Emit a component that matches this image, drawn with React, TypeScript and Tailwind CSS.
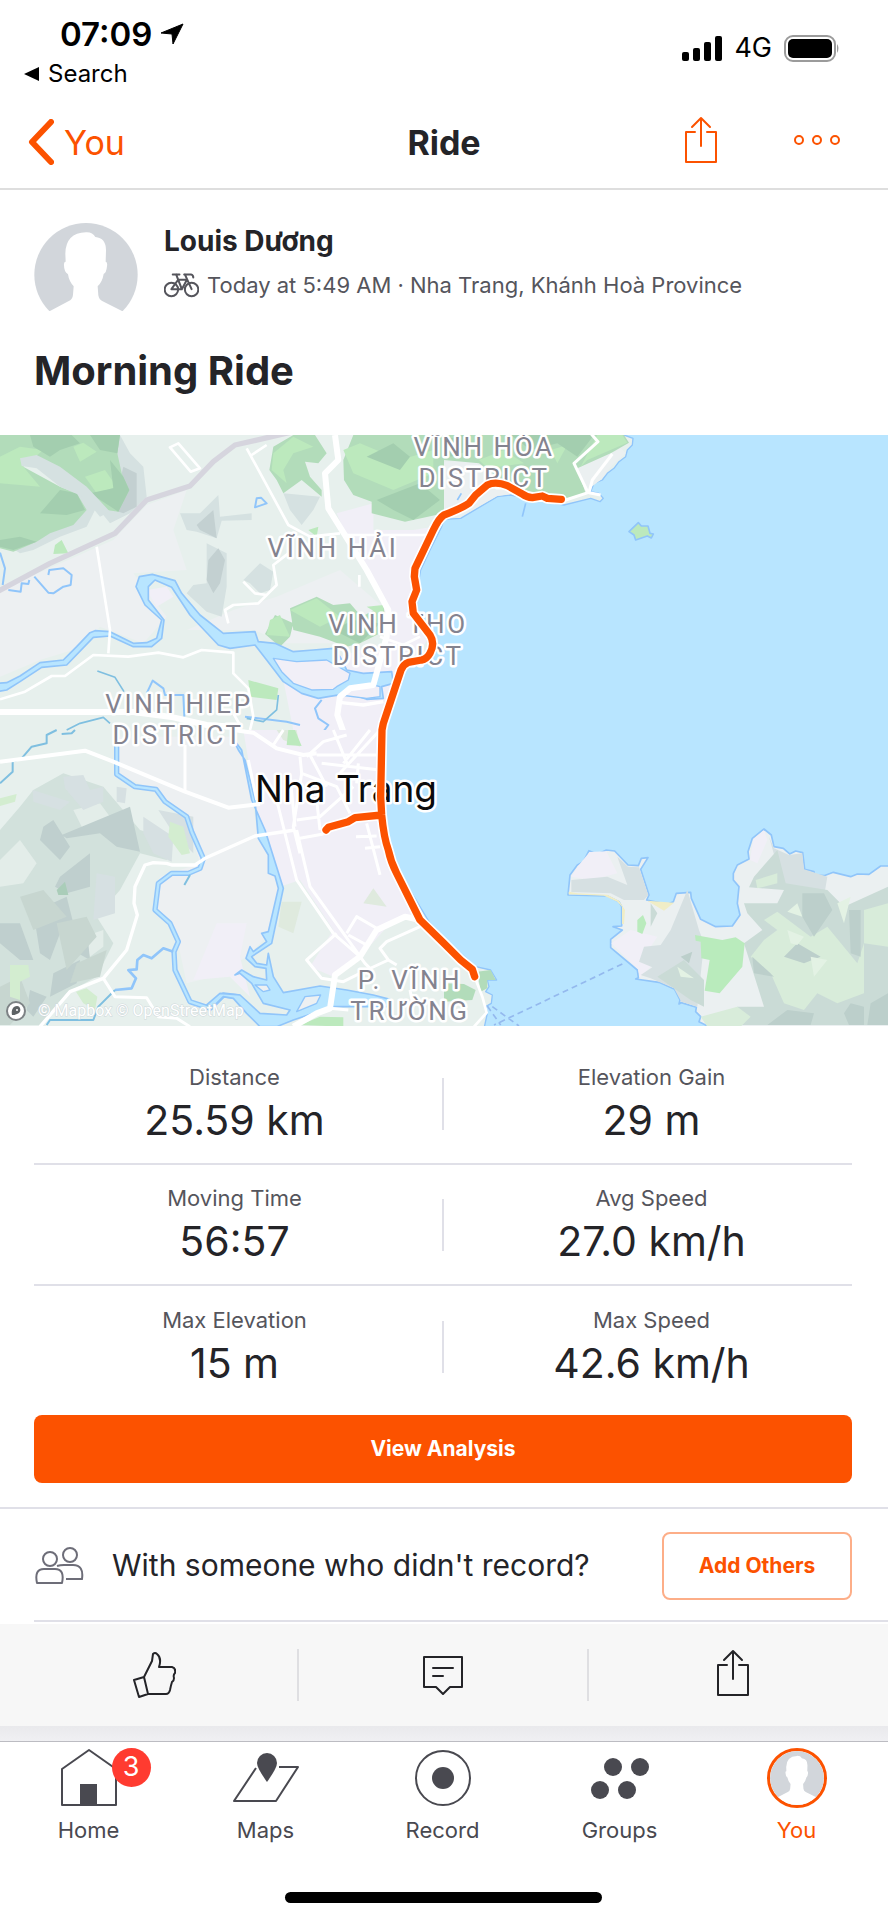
import React from "react";

const stats = [
  [
    { label: "Distance", value: "25.59 km" },
    { label: "Elevation Gain", value: "29 m" },
  ],
  [
    { label: "Moving Time", value: "56:57" },
    { label: "Avg Speed", value: "27.0 km/h" },
  ],
  [
    { label: "Max Elevation", value: "15 m" },
    { label: "Max Speed", value: "42.6 km/h" },
  ],
];

// district names, one entry per line of text
const districts = [
  { x: 484, y: 21, text: "VĨNH HÒA" },
  { x: 484, y: 52, text: "DISTRICT" },
  { x: 333, y: 122, text: "VĨNH HẢI" },
  { x: 398, y: 198, text: "VINH THO" },
  { x: 398, y: 230, text: "DISTRICT" },
  { x: 179, y: 278, text: "VINH HIEP" },
  { x: 178, y: 309, text: "DISTRICT" },
  { x: 410, y: 554, text: "P. VĨNH" },
  { x: 410, y: 585, text: "TRƯỜNG" },
];

const route =
  "M1684 193L1642 190 1627 183 1597 188Q1580 187 1567 177L1522 152Q1487 138 1462 150L1427 180 1407 205Q1385 220 1332 240 1318 248 1300 285L1245 400 1243 425 1250 465 1236 500 1240 535 1290 600Q1306 625 1290 655 1280 673 1265 675L1225 682Q1210 688 1203 705L1150 865 1146 885 1142 1085 1145 1140Q1152 1210 1165 1245 1172 1280 1190 1315L1260 1455 1332 1525 1382 1575 1417 1603 1424 1625M1145 1140L1065 1148 1045 1160 985 1177 978 1185";

function Avatar({ full, className }: { full?: boolean; className: string }) {
  return (
    <svg viewBox={full ? "103 68 310 310" : "103 68 310 264"} className={className} aria-hidden="true">
      <circle cx="258" cy="223" r="155" fill="#d2d6db" />
      <path
        fill="#fff"
        d="M150 332L205 303Q218 297 219 283L221 258Q207 243 204 222 192 215 192 195 191 183 197 184L196 160Q197 98 258 96 278 95 286 110 318 113 318 150L317 184Q323 184 321 198 319 218 311 221 307 245 293 258L295 285Q297 298 308 303L366 332V400H150Z"
      />
    </svg>
  );
}

function ShareIcon({ className }: { className: string }) {
  return (
    <svg viewBox="0 0 34 48" fill="none" stroke="currentColor" strokeWidth="2" strokeLinejoin="round" strokeLinecap="round" className={className} aria-hidden="true">
      <path d="M11 16H2v30h30V16h-9M17 30V2M8 11l9-9 9 9" />
    </svg>
  );
}

function RideMap() {
  return (
    <svg viewBox="0 0 888 591" className="block w-full" role="img" aria-label="Map of the ride around Nha Trang">
      <rect width="888" height="591" fill="#b8e5ff" />
      <g transform="scale(0.33333)" strokeLinejoin="round">
        {/* mainland */}
        <path
          fill="#e7f0ed"
          stroke="#90c5fa"
          strokeWidth="4"
          d="M-10-10H1872V0L1899 10 1897 30 1882 45 1877 65 1857 80 1842 100 1822 115 1807 135 1782 145 1772 170 1797 175 1810 190 1800 200 1772 190 1692 210 1580 190 1532 180 1492 185 1382 250 1332 253 1325 275 1290 345 1262 405 1252 460 1250 535 1300 625 1270 675 1210 685 1185 712 1175 760 1160 835 1142 885 1152 890 1150 1135 1160 1215 1190 1295 1230 1365 1290 1465 1332 1510 1382 1555 1427 1595 1472 1605 1490 1635 1462 1635 1467 1655 1457 1670 1477 1680 1474 1705 1457 1715 1462 1735 1450 1790H-10Z"
        />

        {/* north west */}
        <g transform="translate(0 -15)">
          <path fill="#edf0f2" d="M0 480L340 330 440 225 560 180 520 300 560 420 400 430 500 560 430 640 300 590 250 650 120 690 0 740ZM560 600L700 540 830 500 1020 420 1160 540 1000 640 860 640 760 600Z" />
          <path fill="#f1eff7" d="M1010 250L1120 220 1120 300 1240 300 1300 290 1240 420 1240 520 1290 620 1160 800 1150 900H880L850 750 820 680 980 690 1160 640 1170 530 1040 320ZM440 480L500 470 520 500 470 530Z" />
          <path fill="#d5e1e1" d="M330 15L360 15 390 70 430 110 440 200 390 250 330 280 290 230 260 290 180 320 100 360 60 370 30 350 100 280 240 150ZM540 250L600 250 655 195 660 260 755 250 755 270 665 272 650 325 590 305 560 300ZM620 340L680 370 680 470 665 560 620 545 560 490 580 465 620 460ZM730 450L780 400 820 425 810 480 780 490 750 460ZM850 190L960 200 940 240 905 285 870 240Z" />
          <path fill="#c3d0d1" d="M625 390L655 355 675 390 660 460 640 490 620 450ZM590 285L640 240 650 325 600 300ZM370 110L410 130 410 230 370 250 340 240Z" />
          <path fill="#b2dcba" d="M0 15H360L352 70 365 130 388 180 355 245 320 240 240 170 130 110 70 80 60 105 180 170 230 190 260 240 220 285 150 310 110 335 40 365 0 355ZM820 50L880 15H945L980 70 955 100 915 95 930 140 965 180 965 200 905 150 850 190 830 150 808 120ZM1030 90L1060 15H1332V250L1215 275 1115 250 1115 215 1060 195 1032 150ZM870 535L950 500 1000 525 1050 520 1085 560 1150 525 1160 600 1080 640 1040 650 960 620 880 600ZM825 555L880 580 870 620 840 650 795 612Z" />
          <path fill="#bce9bd" d="M0 80L60 50 130 60 70 110 120 170 0 160ZM220 50L250 38 290 65 240 95ZM255 140L315 120 350 170 290 190ZM820 70L880 20 940 50 880 70 850 120 860 160 815 120ZM1030 60L1080 40 1200 90 1300 60 1300 130 1180 180 1060 130ZM870 540L950 505 1020 560 960 590ZM810 570L840 555 870 620 800 615ZM1100 530L1150 525 1150 560ZM165 345L185 330 205 370 160 372ZM925 300L955 290 950 320ZM745 750L835 775 830 810 750 800Z" />
          <path fill="#a3ceaf" d="M90 15H215L240 40 180 60 150 80 100 50ZM270 15H360L352 70 300 60ZM330 90L370 140 388 180 355 245 270 190 340 175ZM120 250L180 180 230 190 255 240 200 255ZM1100 80L1180 40 1230 80 1200 120ZM1130 210L1260 160 1320 210 1240 270 1180 240ZM1000 600L1060 570 1140 580 1080 640ZM0 330L60 320 110 335 40 360 0 350Z" />
          <path fill="#d5e1e1" d="M60 85L110 75 180 110 260 170 330 245 300 260 250 200 180 170 110 115 65 108Z" />

          {/* waterways */}
          <path fill="#b8e5ff" stroke="#90c5fa" strokeWidth="5" d="M-10 760L20 758 60 738 120 698 190 690 230 650 270 608 285 602 330 605 400 640 440 638 470 625 485 570 435 525 408 470 418 440 457 433 525 452 545 490 600 555 670 610 765 605 775 635 825 640 880 665 940 660 1000 655 1020 680 1040 720 1090 730 1175 725 1180 760 1145 770 1150 805 1100 808 1045 790 985 800 955 805 905 790 850 755 800 690 765 645 690 655 655 645 570 555 515 472 465 450 445 470 445 510 492 570 485 625 455 650 400 650 330 618 280 622 200 705 125 712 60 755 20 780 -10 785Z" />
          <path fill="#f1eff7" stroke="#90c5fa" strokeWidth="4" d="M820 685L890 695 980 690 1050 730 1045 750 1010 770 1000 778 935 780 880 760 845 725ZM1020 795L1050 775 1120 765 1140 770 1140 800 1100 805Z" />
          <path fill="none" stroke="#90c5fa" strokeWidth="6" d="M145 435L148 420 190 415 215 435 212 465 190 470 160 490 145 488 103 440M88 450L85 462 65 460 62 485 25 480M965 810L945 835 955 865 985 885 970 905M0 368L15 415 8 465M770 205L765 232 800 220 783 203ZM440 790L458 752 490 775 495 795 550 795 553 860M735 860L860 875 900 885" />
          <path fill="none" stroke="#7fbfe0" strokeWidth="5" d="M292 723L345 742 372 785M835 795L830 840 790 875 740 865M200 900L240 880 310 862 330 880" />

          {/* roads */}
          <g fill="none" stroke="#fff">
            <path strokeWidth="8" d="M740 55L865 285 930 320 1020 310M755 75L800 45M865 370L820 405 830 465 775 520 700 525 675 540 685 580M730 455L765 490 800 495M290 350L330 600 325 670M0 808L75 785 155 738 195 738 280 675 385 680 475 668 550 682 605 660 700 668 700 730 745 775 760 860 750 900M510 52L535 40 600 115 572 125ZM1040 315L1290 315M1078 435V470M1140 620L1210 645 1260 620M700 850L720 885" />
            <path strokeWidth="18" d="M1005 15L1015 90 975 130 985 235 1100 420 1165 540 1160 620 1120 765 1050 775 1020 800 1012 855 1030 905M0 846H400L520 862 620 885 700 890" />
            <path strokeWidth="10" d="M1025 818L1090 825 1150 815" />
            <path stroke="#d6d5de" strokeWidth="16" d="M-10 486L150 400 345 310 440 210 570 168 640 95 705 45 880 5" />
          </g>
        </g>

        {/* north east headland and islet */}
        <g transform="translate(1332 -15)">
          <path fill="#ebf0f1" d="M0 95L100 90 110 150 360 208 200 192 160 198 50 260 0 262ZM400 115L500 70 530 55 545 70 500 110 470 150 430 180Z" />
          <path fill="#b2dcba" d="M0 15H540L555 38 500 70 400 115 425 190 360 208 200 170 105 100 0 90Z" />
          <path fill="#bce9bd" d="M105 90L180 60 240 100 130 115ZM460 15H535L550 38 430 90 410 110ZM320 60L370 45 340 100Z" />
          <path fill="#a3ceaf" d="M200 15H450L400 80 340 40 260 60ZM0 30L60 15 80 60 20 80Z" />
          <path fill="none" stroke="#90c5fa" strokeWidth="5" d="M245 220L235 260M52 190L40 210" />
          <path fill="none" stroke="#fff" strokeWidth="9" d="M440 10L462 35 390 100 432 188 365 210M505 72L445 150 435 188 470 195" />
          <path fill="#bce9bd" stroke="#90c5fa" strokeWidth="5" d="M555 305L583 278 592 288 612 288 618 310 628 312 622 324 610 318 575 330 570 315Z" />
        </g>

        {/* south west */}
        <g transform="translate(0 885)">
          <path fill="#edf0f2" d="M350 20L700 20 740 90 770 300 830 440 840 520 800 620 740 680 640 740 560 760 530 620 465 530 480 440 600 400 560 270 460 180 350 130Z" />
          <path fill="#f1eff7" d="M730 0H1150L1145 260 1180 410 1250 550 1180 570 1080 680 1000 740 930 710 1000 600 900 450 840 470 780 300ZM650 580L740 580 720 680 750 800 690 740 580 750Z" />
          <path fill="#d2e1dc" d="M0 300L60 230 100 180 190 130 310 170 420 300 520 330 500 390 420 370 360 480 290 560 340 640 290 740 200 790 130 885H0Z" />
          <path fill="#e3ede9" d="M0 390L60 330 110 400 70 460 0 470ZM220 240L300 220 330 260 250 300ZM250 620L310 600 310 650 270 680Z" />
          <path fill="#d6e0e2" d="M190 140L250 135 270 180 310 170 310 215 250 240 195 175ZM98 180L210 215 180 240 100 215ZM350 170L380 175 375 220 350 215ZM430 260L520 320 515 395 460 370 430 310ZM475 240L580 260 580 370 520 310ZM290 430L345 440 345 550 280 570Z" />
          <path fill="#bfcfce" d="M130 290L160 270 210 350 180 390 120 330ZM185 315L390 230 420 365 350 350 300 310 200 325ZM180 440L270 370 270 470 200 490 165 470ZM100 545L200 500 230 620 180 610 150 690 120 670ZM0 580L60 580 100 690 60 690 0 640ZM160 730L240 690 230 760 150 800ZM90 780L140 800 100 860 80 840ZM200 650L260 590 270 690Z" />
          <path fill="#c7d6d0" d="M60 500L130 480 200 560 100 600ZM170 580L260 560 290 620 200 720ZM230 700L320 660 300 740 210 760ZM0 770L60 740 90 820 30 885H0Z" />
          <path fill="#d3edd0" d="M510 275L550 290 570 370 545 375 505 320ZM0 205L50 192 45 215 0 228ZM228 785L260 775 292 800 285 840 250 820ZM30 705L85 705 90 740 60 755 60 810 30 800Z" />
          <path fill="#aacdb9" d="M170 480L195 455 205 495 175 495Z" />
          <path fill="#dfeade" d="M830 0H890L900 50 850 30ZM845 515L905 515 880 610 835 590ZM1090 520L1120 475 1160 530Z" />
          <path fill="#bce9bd" d="M865 0H885L905 48 860 45ZM900 885L960 860 1030 862 1030 890Z" />

          <path fill="none" stroke="#90c5fa" strokeWidth="16" d="M350 20V133L405 170 468 178 495 215 560 260 575 305 610 385 600 415 565 430 515 430 475 460 465 540 510 580 535 635 522 665 525 720 570 815 630 835 670 795 715 800 770 860 830 885" />
          <path fill="none" stroke="#b8e5ff" strokeWidth="7" d="M350 20V133L405 170 468 178 495 215 560 260 575 305 610 385 600 415 565 430 515 430 475 460 465 540 510 580 535 635 522 665 525 720 570 815 630 835 670 795 715 800 770 860 830 885" />
          <path fill="#b8e5ff" stroke="#90c5fa" strokeWidth="5" d="M695 20L725 60 755 210 795 300 850 475 815 640 755 680 770 700 800 705 805 670 820 740 850 788 960 768 1040 780 1120 795 1170 808 1170 830 1000 830 880 870 830 890 780 890 740 850 700 805 670 800 640 830 620 825 660 790 720 795 780 850 860 855 870 840 790 820 755 760 720 730 705 735 725 720 760 740 800 750 798 715 765 710 738 685 750 650 760 665 800 635 785 610 805 605 835 475 825 438 805 430 805 375 775 325 765 210 735 90 715 60Z" />
          <path fill="#edf0f2" stroke="#90c5fa" strokeWidth="4" d="M765 765L800 765 810 780 790 785ZM890 845L915 800 962 795 950 820Z" />
          <path fill="none" stroke="#90c5fa" strokeWidth="8" d="M520 665L490 655 455 685 430 675 412 690 410 718 385 720 408 745 395 775 345 780" />
          <path fill="none" stroke="#7fbfe0" strokeWidth="6" d="M345 780L295 830 280 870 150 870 140 885M0 160L38 125 38 95 65 85 95 50 140 40 140 15 170 0M185 12L215 10 225 0M570 435L553 465" />

          <g fill="none" stroke="#fff">
            <path strokeWidth="12" d="M0 95L255 62 340 95 555 185 685 233 780 222M700 0L760 8 830 55 910 75 950 70" />
            <path strokeWidth="10" d="M120 890L210 785 310 745 380 660 412 555 402 520 405 470 435 405 460 398 500 400 515 405 585 405 615 385 765 318 885 300" />
            <path strokeWidth="18" d="M880 890L950 850 990 835 1005 735 1080 680 1130 600 1215 560 1260 570" />
            <path strokeWidth="9" d="M555 45V180M745 90L770 210M830 210L890 450 1000 610 1080 680M890 300L930 470 1095 700 1115 720M900 80L905 130 880 290 900 370M870 135L885 290M905 130L1010 170 1050 250M930 75L980 170M920 80L970 35 1040 15M950 75H1140M1000 0L1045 110M1030 100L1110 0M965 100L1140 120M1010 140L1140 0M1075 100L1070 160M900 325L970 312M890 270L960 260 1060 170M950 210L960 300M820 45L850 0M1068 320L1130 318M1095 355L1140 350M1100 280L1140 435M1010 610L920 690 965 745 1030 755 1100 720 1165 690 1140 655 1160 635 1260 590M1040 610L1070 560 1130 595M1045 615L1100 645M310 745L345 800 440 803 475 860 530 865 570 890M990 835L1045 840M1230 780L1240 830M1165 690L1190 705" />
          </g>
        </g>

        {/* south east island */}
        <g transform="translate(1332 885)">
          <path
            fill="#ebf0f1"
            stroke="#90c5fa"
            strokeWidth="5"
            d="M372 495L378 435 400 405 418 395 435 362 460 373 487 360 512 363 552 405 583 407 592 385 612 383 590 418 615 495 608 510 670 523 688 515 697 490 740 487 742 505 770 568 815 590 865 588 888 555 880 520 885 470 868 450 868 430 880 405 915 387 912 365 925 325 960 297 982 315 990 350 1018 355 1037 372 1055 363 1076 368 1082 418 1110 425 1112 435 1140 437 1168 427 1220 440 1240 432 1275 433 1310 408 1350 408V900L795 890 765 875 770 860 755 845 757 832 712 818 705 822 708 810 692 778 645 757 575 747 583 743 580 720 500 653 500 628 535 600 507 590 533 588 533 530 525 515 490 498Z"
          />
          <path fill="#f1eff7" d="M382 440L402 408 437 366 487 364 520 430 440 450ZM502 640L560 600 640 620 600 680 620 710 588 742 582 718ZM918 390L928 328 960 300 970 330 940 400Z" />
          <path fill="#f0edc6" d="M374 485L400 490 490 494 525 512 543 540 540 582 534 582 534 530 520 515 480 497 374 493ZM610 512L690 518 660 542Z" />
          <path fill="#d6e0e2" d="M382 450L490 440 550 465 520 380 552 410 585 412 613 495 600 510 540 510 500 490 382 486ZM600 650L650 645 680 600 730 480 765 600 780 640 760 830 712 815 690 775 620 745 590 735 625 712 585 695ZM975 320L990 355 1035 375 1075 370 1080 418 1150 440 1140 500 1020 480Z" />
          <path fill="#cadbd6" d="M930 440L1000 360 1025 460 1150 480 1200 530 1332 470V885H800L880 830 960 830 900 640 955 600 910 550 900 520 1000 520 1020 480 915 472ZM640 740L720 690 780 750 780 830 740 810ZM620 520L640 550 620 590Z" />
          <path fill="#d8ecda" d="M935 450L1000 430 1000 460 940 475ZM960 570L1000 545 1100 620 1150 590 1240 700 1260 640 1260 790 1180 820 1120 790 1080 840 1020 820 980 730 920 680 960 630 1000 600ZM770 860L880 830 920 860 890 890H790ZM1260 540L1332 520V650L1260 640Z" />
          <path fill="#bccfcb" d="M1075 490L1140 490 1165 540 1110 620 1075 560ZM1020 680L1060 640 1130 680 1080 700ZM1215 540L1250 540 1250 680 1220 670ZM925 680L990 740 930 730ZM970 885L1030 840 1110 850 1100 885ZM1200 850L1220 820 1260 830 1260 885H1215ZM710 680L745 665 735 700ZM1280 820L1332 790V885H1270Z" />
          <path fill="#e3f2e4" d="M1030 600L1080 620 1060 645 1040 640ZM1100 680L1150 690 1110 740ZM1180 520L1220 500 1200 580ZM700 710L750 745 710 740ZM1060 520L1075 560 1030 545Z" />
          <path fill="#b9ebbc" d="M753 615L835 630 875 622 902 640 895 710 827 790 782 782 797 690 772 685 770 635 755 632ZM580 570L597 555 607 580 595 612 580 605Z" />
          <path fill="#b2dcba" d="M0 760L60 762 95 780 85 810 0 815ZM100 725L140 720 155 750 130 750 130 775 110 785Z" />
          <path fill="none" stroke="#94b9ee" strokeWidth="5" strokeDasharray="18 12" d="M535 702L150 885M130 828L170 885M145 830L225 888" />
          <path fill="none" stroke="#fff" strokeWidth="8" d="M92 740L115 800 128 848 90 890" />
        </g>
      </g>

      {/* place names sit under the route line */}
      <g textAnchor="middle" fill="#84838f" stroke="#fff" strokeWidth="5" strokeLinejoin="round" className="font-[Roboto,sans-serif] text-[26px] tracking-widest [paint-order:stroke]">
        {districts.map((d) => (
          <text key={d.text + d.y} x={d.x} y={d.y}>
            {d.text}
          </text>
        ))}
      </g>
      <text x="346" y="367" textAnchor="middle" fill="#0b0b0c" stroke="#fff" strokeWidth="5" strokeLinejoin="round" className="text-[37px] [paint-order:stroke]">
        Nha Trang
      </text>

      <g transform="scale(0.33333)" fill="none" strokeLinecap="round" strokeLinejoin="round">
        <path d={route} stroke="#fff" strokeWidth="32" />
        <path d={route} stroke="#fc5200" strokeWidth="22" />
      </g>

      <circle cx="16" cy="576" r="9" fill="#fff" stroke="#7d8285" strokeWidth="2" />
      <path d="M12 580c-1-5 1-9 5-9s5 7 0 8c-2 1-3 1-5 1Z" fill="#5d6265" />
      <circle cx="17" cy="575" r="1" fill="#fff" />
      <text x="38" y="581" fill="#fff" stroke="#cfd8db" strokeWidth="1" className="font-[Roboto,sans-serif] text-base [paint-order:stroke]">
        © Mapbox © OpenStreetMap
      </text>
    </svg>
  );
}

function StatusBar() {
  return (
    <div className="flex h-24 items-center justify-between pr-12 text-black">
      <div className="pt-3 pl-6">
        <div className="flex items-center gap-2 pl-9 text-[33px] leading-10 font-semibold">
          07:09
          <svg viewBox="0 0 24 22" className="h-6 w-6" aria-hidden="true">
            <path d="M23 1L13 21 12 11 1 10Z" fill="currentColor" stroke="currentColor" strokeWidth="1" strokeLinejoin="round" />
          </svg>
        </div>
        <a href="#search" className="flex items-center gap-2 text-2xl leading-10">
          <svg viewBox="0 0 16 16" className="size-4" aria-hidden="true">
            <path d="M15 1v14L0 8Z" fill="currentColor" />
          </svg>
          Search
        </a>
      </div>
      <div className="flex items-center gap-3 text-[27px]">
        <svg viewBox="0 0 40 25" className="h-[25px] w-10" fill="currentColor" aria-hidden="true">
          <rect x="0" y="16" width="7" height="9" rx="2" />
          <rect x="11" y="12" width="7" height="13" rx="2" />
          <rect x="22" y="6" width="7" height="19" rx="2" />
          <rect x="33" y="0" width="7" height="25" rx="2" />
        </svg>
        4G
        <svg viewBox="0 0 56 27" className="h-[27px] w-14" aria-hidden="true">
          <rect x="1" y="1" width="50" height="25" rx="8" fill="none" stroke="#9b9b9b" strokeWidth="2" />
          <rect x="4" y="4" width="44" height="19" rx="5" />
          <path d="M53 9q3 4 0 9Z" fill="#9b9b9b" />
        </svg>
      </div>
    </div>
  );
}

function NavBar() {
  return (
    <header className="grid h-[94px] grid-cols-3 items-center border-b-2 border-[#dedede] pr-12 pl-7">
      <a href="#you" className="flex items-center gap-[10px] text-[34px] text-[#fc5200]">
        <svg viewBox="0 0 26 46" className="h-[46px] w-[26px]" fill="none" stroke="currentColor" strokeWidth="6" strokeLinecap="round" strokeLinejoin="round" aria-hidden="true">
          <path d="M23 3L4 23l19 20" />
        </svg>
        You
      </a>
      <h1 className="pl-5 text-center text-[34px] font-bold">Ride</h1>
      <div className="flex items-center justify-end gap-[76px] pb-1 text-[#fc5200]">
        <button type="button" aria-label="Share">
          <ShareIcon className="h-12 w-[34px]" />
        </button>
        <button type="button" aria-label="More">
          <svg viewBox="0 0 46 12" className="h-3 w-[46px]" fill="none" stroke="currentColor" strokeWidth="2" aria-hidden="true">
            <circle cx="5" cy="6" r="4" />
            <circle cx="23" cy="6" r="4" />
            <circle cx="41" cy="6" r="4" />
          </svg>
        </button>
      </div>
    </header>
  );
}

function TabItem({ label, active, children }: { label: string; active?: boolean; children: React.ReactNode }) {
  return (
    <a href={"#" + label.toLowerCase()} className={active ? "flex flex-col items-center text-[#fc5200]" : "flex flex-col items-center text-[#494950]"}>
      <span className="relative flex h-15 items-center">{children}</span>
      <span className="text-[22px] leading-11">{label}</span>
    </a>
  );
}

export default function App() {
  return (
    <div className="w-full bg-white font-[Inter,sans-serif] text-[#242428]">
      <StatusBar />
      <NavBar />

      <main>
        <section className="px-[34px] pt-[33px] pb-10">
          <div className="flex gap-[26px]">
            <Avatar className="h-[88px] w-[104px] shrink-0" />
            <div>
              <p className="text-[28px] leading-9 font-bold">Louis Dương</p>
              <p className="flex items-center gap-2 pt-2 text-[22px] leading-9 text-[#55555c]">
                <svg viewBox="0 0 104 74" className="h-[25px] w-[35px]" fill="none" stroke="currentColor" strokeWidth="6" strokeLinecap="round" strokeLinejoin="round" aria-hidden="true">
                  <circle cx="22" cy="49" r="20" />
                  <circle cx="82" cy="49" r="20" />
                  <path d="M26 4h20M36 4l17 44M22 48l20-28h26L53 48H22M60 4h20q7 2 7 9M62 4l20 44" />
                </svg>
                Today at 5:49 AM · Nha Trang, Khánh Hoà Province
              </p>
            </div>
          </div>
          <h2 className="pt-9 text-[40px] leading-12 font-bold">Morning Ride</h2>
        </section>

        <RideMap />

        <section className="pt-[18px] pr-9 pb-6 pl-[34px]">
          <dl>
            {stats.map((row, i) => (
              <div key={i} className={i < 2 ? "grid h-[121px] grid-cols-[1fr_16px_1fr] items-center border-b-2 border-[#e0e0e8]" : "grid h-[121px] grid-cols-[1fr_16px_1fr] items-center"}>
                <div className="text-center">
                  <dt className="text-[22px] leading-8 text-[#55555c]">{row[0].label}</dt>
                  <dd className="text-[41px] leading-[54px]">{row[0].value}</dd>
                </div>
                <div className="mx-auto h-13 w-[2px] bg-[#e0e0e8]" />
                <div className="text-center">
                  <dt className="text-[22px] leading-8 text-[#55555c]">{row[1].label}</dt>
                  <dd className="text-[41px] leading-[54px]">{row[1].value}</dd>
                </div>
              </div>
            ))}
          </dl>
          <button type="button" className="mt-2 h-17 w-full rounded-lg bg-[#fc5200] text-[21px] font-bold text-white">
            View Analysis
          </button>
        </section>

        <section className="border-t-2 border-[#e0e0e8] pl-[34px]">
          <div className="flex h-[113px] items-center border-b-2 border-[#e0e0e8] pt-[2px] pr-9">
            <svg viewBox="0 0 50 38" className="h-[38px] w-[50px] shrink-0" fill="none" stroke="#6d6d78" strokeWidth="2" strokeLinejoin="round" aria-hidden="true">
              <circle cx="16" cy="12" r="7" />
              <circle cx="36" cy="8" r="7" />
              <path d="M3 36q-3-14 7-14h11q10 0 7 14ZM23 19q3-1 7-1h9q11 0 9 14H32" />
            </svg>
            <p className="flex-1 pl-7 text-[30px]">With someone who didn't record?</p>
            <button type="button" className="h-17 w-[190px] rounded-lg border-2 border-[#fdae88] text-[21px] font-bold text-[#fc5200]">
              Add Others
            </button>
          </div>
        </section>

        <div className="mt-[2px] grid h-[102px] grid-cols-3 items-center divide-x-2 divide-[#dfdfe2] bg-[#f7f7f7] px-[10px]">
          <button type="button" aria-label="Give kudos" className="flex h-13 items-center justify-center">
            <svg viewBox="0 0 44 48" className="h-12 w-11" fill="none" stroke="currentColor" strokeWidth="2" strokeLinejoin="round" aria-hidden="true">
              <path d="M2 29l10-3 4 17-9 3ZM12 26L20 10l1-7q2-2 4 0 5 4 2 13h13q4 1 3 6-2 2-1 5 0 3-2 4-1 3-2 8-1 4-4 4H16" />
            </svg>
          </button>
          <button type="button" aria-label="Comment" className="flex h-13 items-center justify-center">
            <svg viewBox="0 0 40 40" className="size-10" fill="none" stroke="currentColor" strokeWidth="2" strokeLinejoin="round" strokeLinecap="round" aria-hidden="true">
              <path d="M1 2h38v30H27l-7 7-7-7H1ZM10 13h20M10 21h10" />
            </svg>
          </button>
          <button type="button" aria-label="Share activity" className="flex h-13 items-center justify-center pb-1">
            <ShareIcon className="h-12 w-[34px]" />
          </button>
        </div>
        <div className="h-[15px] bg-gradient-to-b from-[#e9e9ec] to-[#f0f0f3]" />
      </main>

      <nav className="grid grid-cols-5 border-t border-[#bcbcc2] pt-[6px] pr-[3px]">
        <TabItem label="Home">
          <svg viewBox="0 0 56 60" className="h-15 w-14" fill="none" stroke="currentColor" strokeWidth="2" strokeLinejoin="round" aria-hidden="true">
            <path d="M1 21L28 2l27 19v36H1Z" />
            <path d="M19 36h17v21H19Z" fill="currentColor" stroke="none" />
          </svg>
          <span className="absolute top-0 -right-[34px] flex size-[39px] items-center justify-center rounded-full bg-[#ff3b30] text-[27px] text-white">3</span>
        </TabItem>
        <TabItem label="Maps">
          <svg viewBox="0 0 66 60" className="h-15 w-[66px]" fill="none" stroke="currentColor" strokeWidth="2" strokeLinejoin="round" aria-hidden="true">
            <path d="M23 20L1 53h42l22-34H46" />
            <path d="M34 34Q24 20 24 15a10 10 0 0 1 20 0q0 5-10 19Z" fill="currentColor" stroke="none" />
          </svg>
        </TabItem>
        <TabItem label="Record">
          <svg viewBox="0 0 56 60" className="h-15 w-14" fill="none" stroke="currentColor" strokeWidth="2" aria-hidden="true">
            <circle cx="28" cy="30" r="27" />
            <circle cx="28" cy="30" r="11" fill="currentColor" stroke="none" />
          </svg>
        </TabItem>
        <TabItem label="Groups">
          <svg viewBox="0 0 58 60" className="h-15 w-[58px]" fill="currentColor" aria-hidden="true">
            <circle cx="22" cy="19" r="9" />
            <circle cx="49" cy="19" r="9" />
            <circle cx="9" cy="42" r="9" />
            <circle cx="36" cy="42" r="9" />
          </svg>
        </TabItem>
        <TabItem label="You" active>
          <span className="block overflow-hidden rounded-full border-3 border-[#fc5200]">
            <Avatar full className="size-[54px]" />
          </span>
        </TabItem>
      </nav>
      <div className="flex justify-center pt-10 pr-[2px] pb-4">
        <div className="h-[11px] w-[317px] rounded-full bg-black" />
      </div>
    </div>
  );
}
